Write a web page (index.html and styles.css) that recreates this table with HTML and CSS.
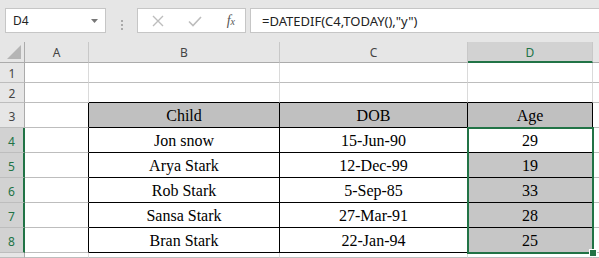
FILE: index.html
```html
<!DOCTYPE html>
<html lang="en">
<head>
    <meta charset="UTF-8">
    <title>Book1 - Age</title>
    <link rel="stylesheet" href="styles.css">
</head>
<body>

    <!-- Name box + formula bar -->
    <div class="formula-bar">
        <div class="name-box">
            <span>D4</span>
            <svg class="drop" width="8" height="4" viewBox="0 0 8 4"><path d="M0 0h7L3.5 4z" fill="#777"/></svg>
        </div>
        <div class="grip"><i></i><i></i><i></i></div>
        <div class="fx-buttons">
            <svg class="btn-icon" width="12" height="12" viewBox="0 0 12 12"><path d="M1 1l10 10M11 1L1 11" stroke="#bdbdbd" stroke-width="1.4" fill="none"/></svg>
            <svg class="btn-icon" width="14" height="12" viewBox="0 0 14 12"><path d="M1 6.5l4 4L13 2" stroke="#bdbdbd" stroke-width="1.6" fill="none"/></svg>
            <span class="fx">f<sub>x</sub></span>
        </div>
        <div class="formula-input">=DATEDIF(C4,TODAY(),"y")</div>
    </div>

    <!-- Worksheet grid -->
    <div class="sheet">
        <div class="corner"><svg width="14" height="14" viewBox="0 0 14 14"><path d="M14 0v14H0z" fill="#b5b5b5"/></svg></div>
        <div class="col-hdr">A</div>
        <div class="col-hdr">B</div>
        <div class="col-hdr">C</div>
        <div class="col-hdr active">D</div>
        <div class="col-hdr rest"></div>

        <div class="row-hdr">1</div>
        <div class="cell"></div><div class="cell"></div><div class="cell"></div><div class="cell"></div><div class="cell rest"></div>

        <div class="row-hdr">2</div>
        <div class="cell"></div><div class="cell edge-b"></div><div class="cell edge-b"></div><div class="cell edge-b"></div><div class="cell rest"></div>

        <div class="row-hdr">3</div>
        <div class="cell edge-r"></div>
        <div class="cell tbl head">Child</div>
        <div class="cell tbl head">DOB</div>
        <div class="cell tbl head">Age</div>
        <div class="cell rest"></div>

        <div class="row-hdr active">4</div>
        <div class="cell edge-r"></div>
        <div class="cell tbl">Jon snow</div>
        <div class="cell tbl">15-Jun-90</div>
        <div class="cell tbl anchor">29
            <!-- selected range D4:D8 -->
            <div class="selection"><span class="handle"></span></div>
        </div>
        <div class="cell rest"></div>

        <div class="row-hdr active">5</div>
        <div class="cell edge-r"></div>
        <div class="cell tbl">Arya Stark</div>
        <div class="cell tbl">12-Dec-99</div>
        <div class="cell tbl sel">19</div>
        <div class="cell rest"></div>

        <div class="row-hdr active">6</div>
        <div class="cell edge-r"></div>
        <div class="cell tbl">Rob Stark</div>
        <div class="cell tbl">5-Sep-85</div>
        <div class="cell tbl sel">33</div>
        <div class="cell rest"></div>

        <div class="row-hdr active">7</div>
        <div class="cell edge-r"></div>
        <div class="cell tbl">Sansa Stark</div>
        <div class="cell tbl">27-Mar-91</div>
        <div class="cell tbl sel">28</div>
        <div class="cell rest"></div>

        <div class="row-hdr active">8</div>
        <div class="cell edge-r"></div>
        <div class="cell tbl">Bran Stark</div>
        <div class="cell tbl">22-Jan-94</div>
        <div class="cell tbl sel">25</div>
        <div class="cell rest"></div>

        <!-- next row, only its top edge shows -->
        <div class="row-hdr"></div>
        <div class="cell"></div><div class="cell"></div><div class="cell"></div><div class="cell"></div><div class="cell rest"></div>
    </div>

</body>
</html>
```

FILE: styles.css
```css
/* Page */
body {
    margin: 0;
    width: 599px;
    height: 258px;
    overflow: hidden;
    background-color: #e6e6e6;
    font-family: "Noto Sans", "Open Sans", sans-serif;
    color: #444;
}

/* Formula bar */
.formula-bar {
    display: flex;
    height: 42px;
    padding-top: 8px;
    box-sizing: border-box;
}
.name-box,
.fx-buttons,
.formula-input {
    height: 25px;
    box-sizing: border-box;
    background-color: #fff;
    border: 1px solid #c6c6c6;
    display: flex;
    align-items: center;
}
.name-box {
    width: 101px;
    margin-left: 5px;
    padding: 0 6px 0 7px;
    justify-content: space-between;
    font-size: 12px;
    color: #222;
}
.grip {
    width: 31px;
    display: flex;
    flex-direction: column;
    align-items: center;
    justify-content: center;
    gap: 2px;
}
.grip i {
    width: 2px;
    height: 2px;
    background-color: #aaa;
}
.fx-buttons {
    width: 109px;
    padding: 0 10px 0 14px;
    justify-content: space-between;
}
.fx {
    font-family: "Liberation Serif", serif;
    font-style: italic;
    font-size: 14px;
    color: #555;
    line-height: 1;
}
.fx sub {
    font-size: 10px;
    vertical-align: baseline;
}
.formula-input {
    flex: 1;
    margin-left: 4px;
    margin-right: -2px;
    padding-left: 11px;
    font-size: 13px;
    color: #222;
}

/* Worksheet */
.sheet {
    display: grid;
    grid-template-columns: 25px 64px 191px 188px 125px 1fr;
    grid-template-rows: 21px 20px 20px 25px repeat(5, 25px) 1fr;
    height: 216px;
    background-color: #fff;
}
.sheet > div {
    box-sizing: border-box;
}
.corner,
.col-hdr,
.row-hdr {
    background-color: #e6e6e6;
    font-size: 12px;
    display: flex;
    align-items: center;
    justify-content: center;
}
.corner {
    justify-content: flex-end;
    align-items: flex-end;
    padding: 0 3px 3px 0;
    border-right: 1px solid #ababab;
    border-bottom: 1px solid #ababab;
}
.col-hdr {
    border-right: 1px solid #c8c8c8;
    border-bottom: 1px solid #ababab;
    padding-top: 1px;
}
.row-hdr {
    border-right: 1px solid #ababab;
    border-bottom: 1px solid #bdbdbd;
    padding-top: 2px;
}
.col-hdr.active {
    background-color: #d2d2d2;
    color: #217346;
    border-bottom: 2px solid #217346;
}
.row-hdr.active {
    background-color: #d2d2d2;
    color: #217346;
    border-right: 2px solid #217346;
}
.col-hdr.rest {
    border-right: none;
}

/* Cells */
.cell {
    border-right: 1px solid #dadada;
    border-bottom: 1px solid #bdbdbd;
}
.cell.rest {
    border-right: none;
}
.cell.edge-b {
    border-bottom-color: #000;
}
.cell.edge-r {
    border-right-color: #000;
}
.cell.tbl {
    border-right-color: #000;
    border-bottom-color: #000;
    font-family: "Liberation Serif", serif;
    font-size: 16px;
    color: #000;
    display: flex;
    align-items: flex-end;
    justify-content: center;
    padding-bottom: 2px;
}
.cell.head {
    background-color: #c0c0c0;
}
.cell.sel {
    background-color: #c6c6c6;
}

/* Selected range outline, drawn from the active cell over D4:D8 */
.cell.anchor {
    position: relative;
}
.selection {
    position: absolute;
    left: -1px;
    top: -1px;
    width: 127px;
    height: 127px;
    box-sizing: border-box;
    border: 2px solid #217346;
    z-index: 2;
}
.handle {
    position: absolute;
    right: -5px;
    bottom: -5px;
    width: 6px;
    height: 6px;
    background-color: #217346;
    border: 1px solid #fff;
}
```
